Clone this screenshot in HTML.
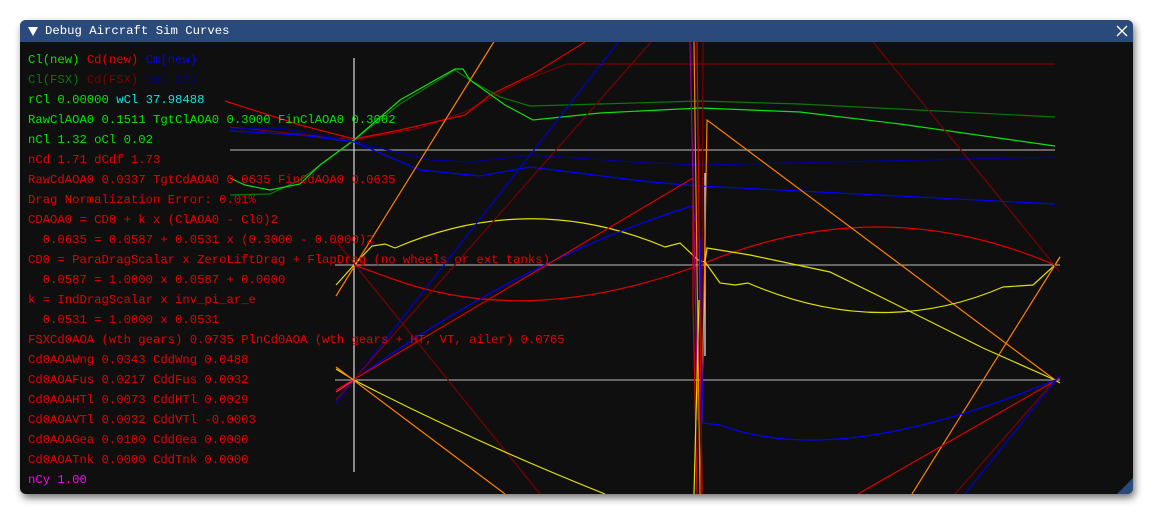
<!DOCTYPE html>
<html><head><meta charset="utf-8"><style>
html,body{margin:0;padding:0;background:#fff;width:1154px;height:515px;overflow:hidden}
.win{position:absolute;left:20px;top:20px;width:1113px;height:474px;background:#0f0f0f;border-radius:6px;overflow:hidden;box-shadow:2px 4px 8px rgba(0,0,0,.55)}
.title{position:absolute;left:0;top:0;width:100%;height:22px;background:#294a7a;color:#fff;font:12.3px "Liberation Mono","DejaVu Sans Mono",monospace;line-height:22px}
.title .t{position:absolute;left:25px;top:0}
.tri{position:absolute;left:8px;top:7px;width:0;height:0;border-left:5px solid transparent;border-right:5px solid transparent;border-top:9px solid #fff}
svg{position:absolute;left:0;top:0}
.txt{position:absolute;left:8px;top:30px;font:12.25px "Liberation Mono","DejaVu Sans Mono",monospace;line-height:20px;white-space:pre;color:#e60000}
.g{color:#00e600}.r{color:#e60000}.b{color:#0000ff}.dg{color:#0a780a}.dr{color:#7a0000}.db{color:#00007a}.c{color:#00e6e6}.m{color:#ff00ff}
</style></head><body>
<div class="win">
<svg width="1113" height="474" viewBox="20 20 1113 474" fill="none" stroke-width="1.2">
<g stroke="#9a9a9a"><line x1="230" y1="150" x2="1055" y2="150"/><line x1="335" y1="265" x2="1060" y2="265"/><line x1="335" y1="380" x2="1060" y2="380"/></g>
<line x1="354" y1="58" x2="354" y2="472" stroke="#ddd"/>
<line x1="705" y1="173" x2="705" y2="356" stroke="#eee"/>
<polyline stroke="#7a0000" points="230,127 354,140 420,128 465,112 520,82 567,64 1055,64"/>
<polyline stroke="#e00000" points="225,101 300,125 354,139 400,130 465,115 490,95 535,73 585,42"/>
<polyline stroke="#0a780a" points="230,195 270,194 300,180 354,140 400,104 455,70 470,80 500,97 530,106 600,104 700,101 800,104 1055,117"/>
<polyline stroke="#10e010" points="230,178 245,185 270,190 300,184 320,165 354,140 400,100 455,69 463,69 470,80 505,105 533,120 600,113 700,108 800,112 900,124 1055,146"/>
<polyline stroke="#0000a0" points="230,129 280,128 354,142 430,160 470,162 530,155 650,163 700,165 1055,157"/>
<polyline stroke="#0000ff" points="230,131 300,135 354,142 420,170 480,176 530,167 650,182 700,186 1055,204"/>
<line x1="336" y1="296" x2="495" y2="40" stroke="#ff8000"/>
<path stroke="#e0e000" d="M336,285 L354,265 L372,246 L385,244 L395,248 Q530,190 665,247 L680,243 L698,260 L705,262"/>
<path stroke="#e00000" d="M354,265 L390,278 Q530,330 705,263 Q880,190 1055,265"/>
<line x1="335" y1="240" x2="540" y2="494" stroke="#7a0000"/>
<line x1="336" y1="403" x2="620" y2="40" stroke="#0000d0"/>
<line x1="336" y1="400" x2="651" y2="42" stroke="#7a0000"/>
<path stroke="#0000ff" d="M354,380 Q520,260 692,206"/>
<line x1="336" y1="390" x2="693" y2="178" stroke="#e00000"/>
<line x1="336" y1="392" x2="354" y2="380" stroke="#ff2080"/>
<path stroke="#e0e000" d="M336,369 L354,380 Q470,440 605,494"/>
<line x1="336" y1="367" x2="505" y2="494" stroke="#ff8000"/>
<polyline stroke="#ff8000" points="700,494 704,300 707,120 1055,380"/>
<polyline stroke="#e0e000" points="705,262 707,248 750,255 830,272 883,298 983,348 1055,380 1060,383"/>
<path stroke="#e0e000" d="M705,262 L720,283 L735,285 L748,283 Q880,340 1003,287 L1033,285 L1055,265 L1060,257"/>
<line x1="912" y1="494" x2="1060" y2="257" stroke="#ff8000"/>
<line x1="858" y1="494" x2="1060" y2="378" stroke="#e00000"/>
<line x1="955" y1="494" x2="1055" y2="380" stroke="#7a0000"/>
<line x1="965" y1="494" x2="1060" y2="375" stroke="#0000d0"/>
<line x1="873" y1="42" x2="1060" y2="272" stroke="#7a0000"/>
<path stroke="#0000ff" d="M692,206 L700,240 L703,423 L720,425 Q840,470 1055,380"/>
<polyline stroke="#e00000" points="693,178 693,300 697,494"/>
<line x1="694" y1="42" x2="700" y2="494" stroke="#ff8000"/>
<line x1="697" y1="42" x2="702" y2="494" stroke="#e00000"/>
<line x1="703" y1="42" x2="701" y2="494" stroke="#7a0000"/>
<line x1="690" y1="42" x2="698" y2="420" stroke="#a0008a"/>
<line x1="699" y1="300" x2="694" y2="494" stroke="#e0e000"/>
<polygon points="1133,478 1133,494 1117,494" fill="#294a7a" stroke="none"/>
</svg>
<div class="title"><div class="tri"></div><span class="t">Debug Aircraft Sim Curves</span>
<svg width="12" height="12" style="left:1096px;top:5px" stroke="#fff" stroke-width="1.3"><line x1="1" y1="1" x2="11" y2="11"/><line x1="11" y1="1" x2="1" y2="11"/></svg></div>
<div class="txt"><span class="g">Cl(new)</span> <span class="r">Cd(new)</span> <span class="b">Cm(new)</span>
<span class="dg">Cl(FSX)</span> <span class="dr">Cd(FSX)</span> <span class="db">Cm(FSX)</span>
<span class="g">rCl 0.00000</span> <span class="c">wCl 37.98488</span>
<span class="g">RawClAOA0 0.1511 TgtClAOA0 0.3000 FinClAOA0 0.3002</span>
<span class="g">nCl 1.32 oCl 0.02</span>
nCd 1.71 dCdf 1.73
RawCdAOA0 0.0337 TgtCdAOA0 0.0635 FinCdAOA0 0.0635
Drag Normalization Error: 0.01%
CDAOA0 = CD0 + k x (ClAOA0 - Cl0)2
  0.0635 = 0.0587 + 0.0531 x (0.3000 - 0.0000)2
CD0 = ParaDragScalar x ZeroLiftDrag + FlapDrag (no wheels or ext tanks)
  0.0587 = 1.0000 x 0.0587 + 0.0000
k = IndDragScalar x inv_pi_ar_e
  0.0531 = 1.0000 x 0.0531
FSXCd0AOA (wth gears) 0.0735 PlnCd0AOA (wth gears + HT, VT, ailer) 0.0765
Cd0AOAWng 0.0343 CddWng 0.0488
Cd0AOAFus 0.0217 CddFus 0.0032
Cd0AOAHTl 0.0073 CddHTl 0.0029
Cd0AOAVTl 0.0032 CddVTl -0.0003
Cd0AOAGea 0.0100 CddGea 0.0000
Cd0AOATnk 0.0000 CddTnk 0.0000
<span class="m">nCy 1.00</span></div>
</div>
</body></html>
